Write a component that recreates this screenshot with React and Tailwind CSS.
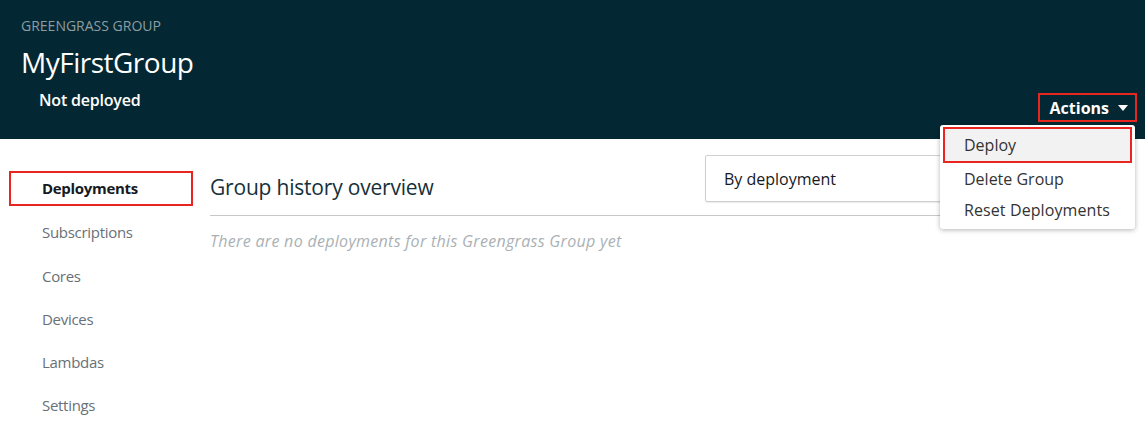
import React from "react";

const navItems = ["Subscriptions", "Cores", "Devices", "Lambdas", "Settings"];

export default function App() {
  return (
    <div
      className="relative w-[1145px] h-[444px] overflow-hidden bg-white"
      style={{ fontFamily: '"Open Sans", "Liberation Sans", sans-serif' }}
    >
      <header className="h-[139px] bg-[#042833] pl-[21px] pr-[8px] pt-[16px]">
        <div className="text-[14px] leading-[20px] text-[#8d9ca1]">GREENGRASS GROUP</div>
        <h1 className="mt-[8px] text-[28px] leading-[36px] text-white tracking-[-0.5px]">MyFirstGroup</h1>
        <div className="mt-[4px] flex items-start justify-between">
          <div className="pl-[18px] pt-[4px] text-[16px] leading-[24px] font-semibold text-white tracking-[-0.2px]">Not deployed</div>
          <div className="mt-[9px] flex h-[29px] w-[99px] items-center justify-end gap-[9px] border-2 border-[#e8251f] pr-[6px]">
            <span className="text-[16px] font-bold text-white">Actions</span>
            <svg width="10" height="6" viewBox="0 0 10 6" className="mr-[1px]">
              <path d="M0 0 H10 L5 6 Z" fill="#ffffff" />
            </svg>
          </div>
        </div>
      </header>

      <div className="flex">
        <nav className="w-[210px] shrink-0 pl-[9px] pt-[32px]">
          <div className="flex h-[35px] w-[184px] items-center border-2 border-[#e8251f] pl-[31px] text-[15px] font-bold text-[#16191f] tracking-[-0.3px]">
            Deployments
          </div>
          <ul className="mt-[5px]">
            {navItems.map((n) => (
              <li key={n} className="flex h-[43.2px] items-center pl-[33px] text-[15px] text-[#687078] tracking-[-0.3px]">
                {n}
              </li>
            ))}
          </ul>
        </nav>

        <main className="flex-1 pr-[20px] pt-[16px]">
          <div className="flex items-start border-b border-[#c7c7c7] pb-[13px]">
            <h2 className="mt-[18px] flex-1 text-[21px] leading-[28px] text-[#16303a] tracking-[-0.2px]">Group history overview</h2>
            <div className="flex h-[47px] w-[420px] items-center rounded-[2px] border border-[#cfcfcf] pl-[18px] text-[16px] text-[#16191f] shadow-[0_1px_1px_rgba(0,0,0,0.08)]">
              By deployment
            </div>
          </div>
          <p className="mt-[13px] text-[16px] leading-[24px] italic text-[#aab1b4] tracking-[0.3px]">
            There are no deployments for this Greengrass Group yet
          </p>
        </main>
      </div>

      <div className="absolute left-[940px] top-[125px] w-[195px] rounded-[3px] bg-white py-[2px] shadow-[0_1px_5px_rgba(0,0,0,0.3)]">
        <div className="mx-[3px] flex h-[36px] items-center border-2 border-[#e8251f] bg-[#f2f2f2] pl-[19px] text-[16px] text-[#333]">
          Deploy
        </div>
        <div className="flex h-[31px] items-center pl-[24px] text-[16px] text-[#333]">Delete Group</div>
        <div className="flex h-[31px] items-center pl-[24px] text-[16px] text-[#333] tracking-[0.1px]">Reset Deployments</div>
        <div className="h-[2px]" />
      </div>
    </div>
  );
}
